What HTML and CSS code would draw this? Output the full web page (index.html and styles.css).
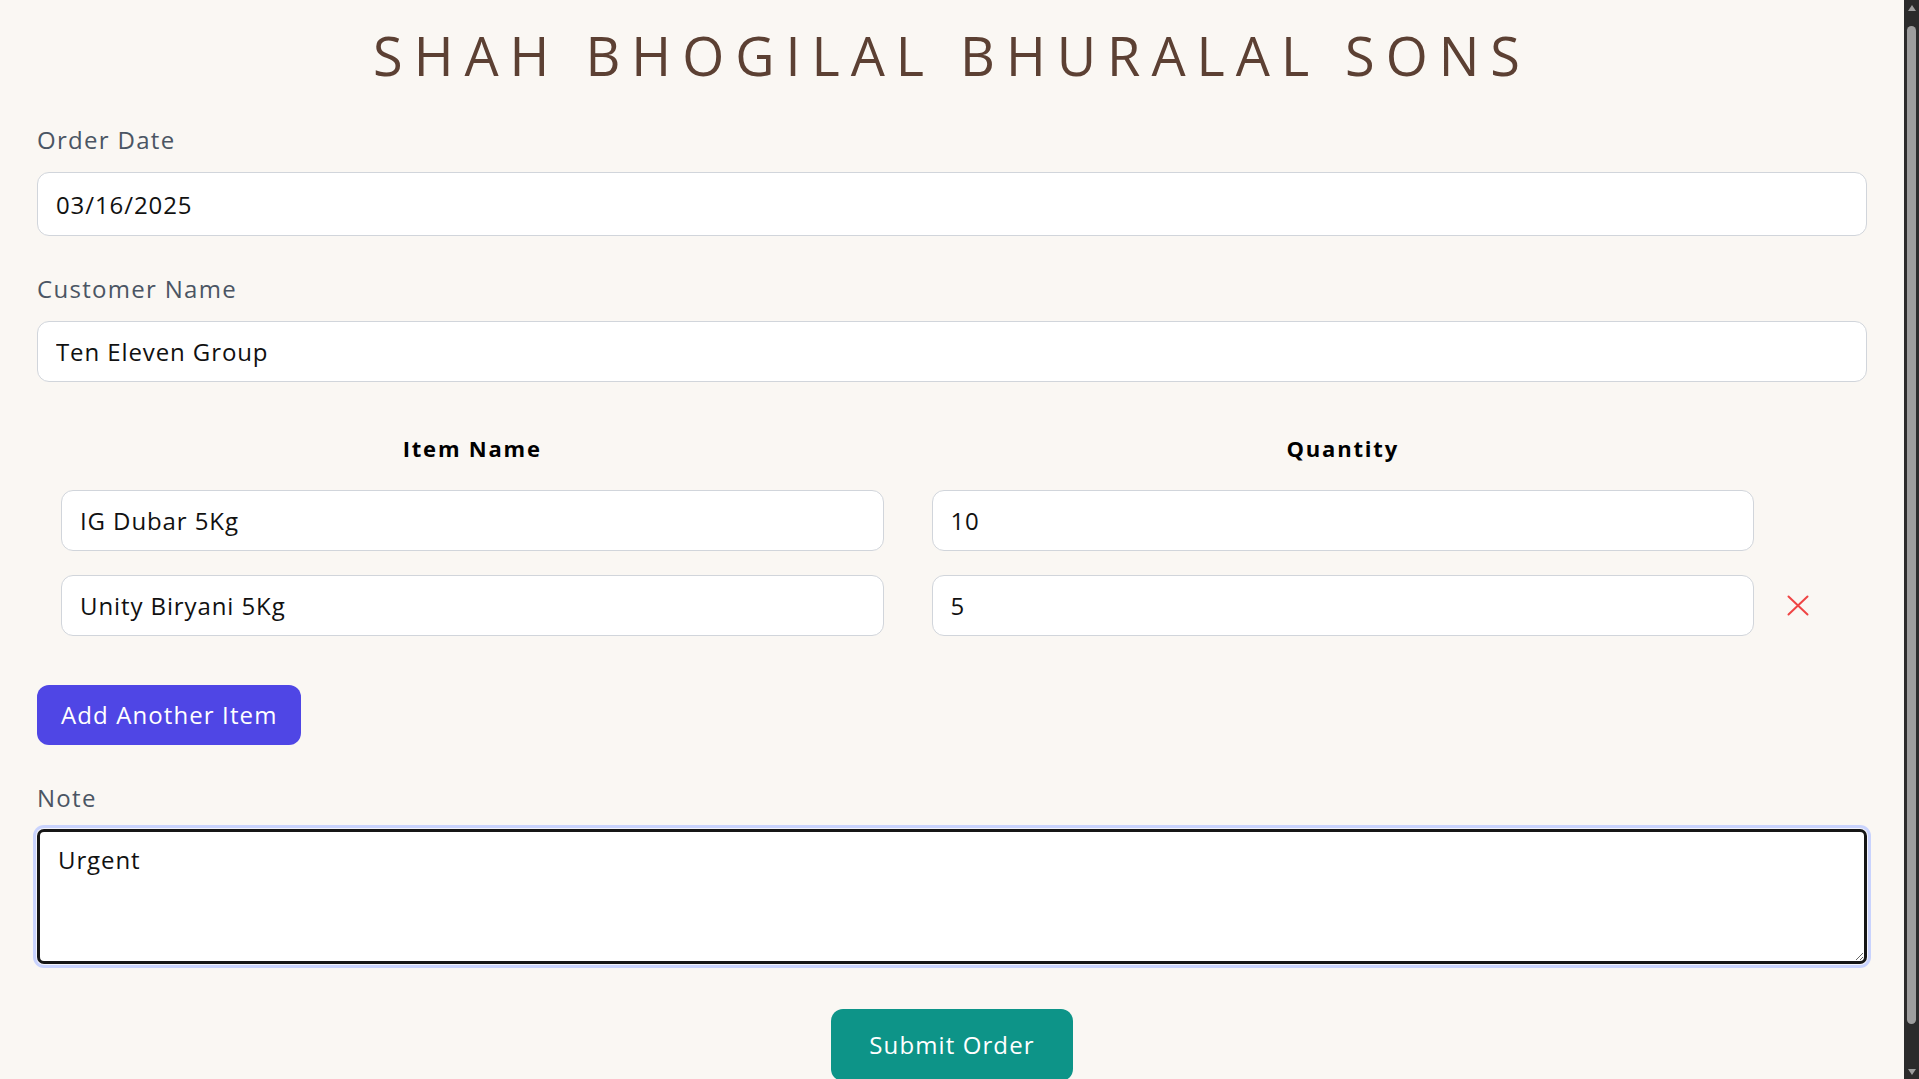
FILE: index.html
```html
<!DOCTYPE html>
<html lang="en">
<head>
<meta charset="utf-8">
<title>Shah Bhogilal Bhuralal Sons – Order</title>
<link rel="stylesheet" href="styles.css">
</head>
<body>
<main class="page">
  <h1 class="title">SHAH BHOGILAL BHURALAL SONS</h1>
  <form class="order-form">
    <div class="field">
      <label class="field-label" for="date">Order Date</label>
      <input id="date" class="text-input date-input" type="text" value="03/16/2025">
    </div>
    <div class="field">
      <label class="field-label" for="customer">Customer Name</label>
      <input id="customer" class="text-input" type="text" value="Ten Eleven Group">
    </div>

    <div class="items">
      <div class="items-head">Item Name</div>
      <div class="items-head">Quantity</div>
      <div class="items-head"></div>

      <div class="cell"><input class="text-input" type="text" value="IG Dubar 5Kg"></div>
      <div class="cell"><input class="text-input" type="text" value="10"></div>
      <div class="cell action"></div>

      <div class="cell"><input class="text-input" type="text" value="Unity Biryani 5Kg"></div>
      <div class="cell"><input class="text-input" type="text" value="5"></div>
      <div class="cell action">
        <button type="button" class="remove-btn" aria-label="Remove item">
          <svg width="22" height="21" viewBox="0 0 22 21" aria-hidden="true">
            <path d="M1.5 1.5 L20.5 19.5 M20.5 1.5 L1.5 19.5" stroke="#ef4444" stroke-width="2" fill="none" stroke-linecap="round"/>
          </svg>
        </button>
      </div>
    </div>

    <button type="button" class="btn btn-add">Add Another Item</button>

    <div class="field note-field">
      <label class="field-label" for="note">Note</label>
      <textarea id="note" class="note">Urgent</textarea>
    </div>

    <div class="submit-row">
      <button type="submit" class="btn btn-submit">Submit Order</button>
    </div>
  </form>
</main>
<div class="scrollbar" aria-hidden="true">
  <span class="sb-arrow sb-up"></span>
  <span class="sb-thumb"></span>
  <span class="sb-arrow sb-down"></span>
</div>
</body>
</html>
```

FILE: styles.css
```css
* {
  box-sizing: border-box;
}

html {
  background: #faf7f3;
}

body {
  margin: 0;
  padding-right: 15px;
  background: #faf7f3;
  font-family: "Open Sans", "Liberation Sans", sans-serif;
  font-size: 24px;
  letter-spacing: 0.9px;
  color: #111111;
}

.page {
  padding: 25px 37px 52px;
}

.title {
  margin: 0 0 37px;
  text-align: center;
  font-size: 54px;
  line-height: 60px;
  font-weight: 400;
  letter-spacing: 11px;
  color: #5c4033;
}

.order-form {
  display: flex;
  flex-direction: column;
}

.field {
  display: flex;
  flex-direction: column;
  margin-bottom: 35px;
}

.field-label {
  display: block;
  line-height: 36px;
  margin-bottom: 14px;
  letter-spacing: 1.3px;
  color: #4b5563;
}

.text-input {
  display: block;
  width: 100%;
  height: 61px;
  padding: 0 18px;
  border: 1px solid #d1d5db;
  border-radius: 12px;
  background: #ffffff;
  font-family: inherit;
  font-size: 24px;
  letter-spacing: 0.9px;
  color: #111111;
  outline: none;
}

.date-input {
  height: 64px;
}

.items {
  display: grid;
  grid-template-columns: 1fr 1fr 89px;
  margin-bottom: 37px;
}

.items-head {
  height: 61px;
  display: flex;
  align-items: center;
  justify-content: center;
  font-size: 22px;
  font-weight: 700;
  letter-spacing: 1.8px;
  color: #000000;
}

.cell {
  padding: 12px 24px;
}

.cell.action {
  padding: 12px 0 12px 9px;
  display: flex;
  align-items: center;
}

.remove-btn {
  display: flex;
  padding: 0;
  border: 0;
  background: transparent;
  cursor: pointer;
}

.btn {
  border: 0;
  border-radius: 12px;
  font-family: inherit;
  font-size: 24px;
  letter-spacing: 1.1px;
  line-height: 36px;
  color: #ffffff;
  cursor: pointer;
}

.btn-add {
  align-self: flex-start;
  padding: 12px 24px;
  background: #4f46e5;
}

.note-field {
  margin-top: 35px;
  margin-bottom: 0;
}

.note-field .field-label {
  margin-bottom: 13px;
}

.note {
  display: block;
  width: 100%;
  height: 135px;
  padding: 10px 18px;
  border: 3px solid #161616;
  border-radius: 7px;
  background: #ffffff;
  box-shadow: 0 0 0 1px #f4f4fb, 0 0 0 4px #c9d3fd;
  font-family: inherit;
  font-size: 24px;
  line-height: 36px;
  letter-spacing: 0.9px;
  color: #111111;
  resize: vertical;
  outline: none;
}

.submit-row {
  display: flex;
  justify-content: center;
  margin-top: 45px;
}

.btn-submit {
  padding: 18px 38px;
  background: #0d9488;
}

/* Drawn window scrollbar (overlay on the right edge) */
.scrollbar {
  position: fixed;
  top: 0;
  right: 0;
  width: 15px;
  height: 100vh;
  background: #2b2b2b;
  display: flex;
  flex-direction: column;
  align-items: center;
}

.sb-arrow {
  display: block;
  width: 0;
  height: 0;
  border-left: 4.5px solid transparent;
  border-right: 4.5px solid transparent;
}

.sb-up {
  margin-top: 5px;
  border-bottom: 6px solid #9d9d9d;
}

.sb-thumb {
  display: block;
  width: 9px;
  height: 998px;
  margin-top: 15px;
  border-radius: 5px;
  background: #9d9d9d;
}

.sb-down {
  margin-top: auto;
  margin-bottom: 4px;
  border-top: 6px solid #9d9d9d;
}
```
